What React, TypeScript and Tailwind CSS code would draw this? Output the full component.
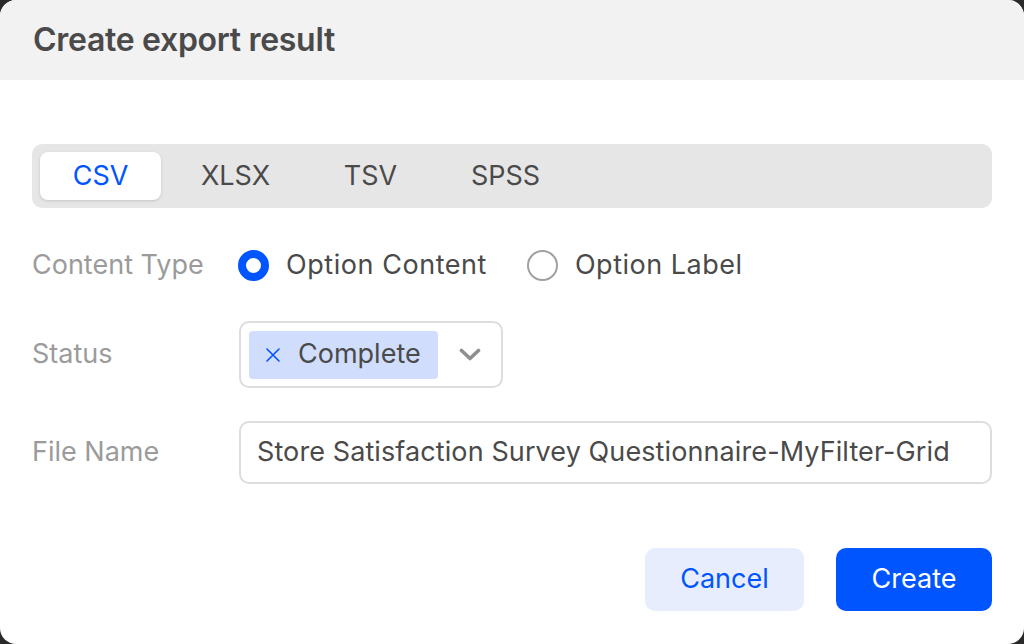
const tabs = ["CSV", "XLSX", "TSV", "SPSS"];

export default function App() {
  return (
    <div
      className="h-[644px] w-[1024px] bg-[#2a2a2a]"
      style={{ fontFamily: "Inter, 'Noto Sans', sans-serif" }}
    >
      <div className="flex h-full w-full flex-col overflow-hidden rounded-[16px] bg-white">
        <div className="flex h-[80px] shrink-0 items-center bg-[#f2f2f2] px-[33px]">
          <h1 className="text-[32px] font-semibold tracking-[-0.3px] text-[#4a4a4a]">
            Create export result
          </h1>
        </div>

        <div className="flex flex-1 flex-col px-[32px] pt-[64px]">
          {/* format tabs */}
          <div className="flex h-[64px] items-center gap-[14px] rounded-[10px] bg-[#e6e6e6] px-[8px]">
            {tabs.map((t, i) => (
              <div
                key={t}
                className={
                  i === 0
                    ? "flex h-[48px] w-[121px] items-center justify-center rounded-[8px] bg-white text-[27px] text-[#0055ff] shadow-[0_1px_3px_rgba(0,0,0,0.15)]"
                    : "flex h-[48px] w-[121px] items-center justify-center text-[27px] text-[#4a4a4a]"
                }
              >
                {t}
              </div>
            ))}
          </div>

          {/* content type */}
          <div className="mt-[24px] flex h-[66px] items-center">
            <div className="w-[206px] shrink-0 text-[27px] text-[#9b9b9b]">Content Type</div>
            <div className="flex items-center">
              <span className="h-[31px] w-[31px] rounded-full border-[8px] border-[#0055ff] bg-white" />
              <span className="ml-[17px] text-[27px] tracking-[0.55px] text-[#4a4a4a]">Option Content</span>
              <span className="ml-[40px] h-[31px] w-[31px] rounded-full border-2 border-[#a0a0a0] bg-white" />
              <span className="ml-[17px] text-[27px] tracking-[0.5px] text-[#4a4a4a]">Option Label</span>
            </div>
          </div>

          {/* status */}
          <div className="mt-[23px] flex items-center">
            <div className="w-[207px] shrink-0 text-[27px] text-[#9b9b9b]">Status</div>
            <div className="flex h-[67px] w-[264px] items-center rounded-[10px] border-2 border-[#dddddd] pl-[8px] pr-[20px]">
              <div className="flex h-[48px] w-[189px] items-center rounded-[4px] bg-[#d1ddfc] pl-[17px]">
                <svg width="14" height="14" viewBox="0 0 14 14" className="shrink-0">
                  <path d="M1 1L13 13M13 1L1 13" stroke="#0055ff" strokeWidth="1.6" strokeLinecap="round" />
                </svg>
                <span className="ml-[18px] text-[27px] text-[#4a4a4a]">Complete</span>
              </div>
              <svg width="22" height="13" viewBox="0 0 22 13" className="ml-auto shrink-0">
                <path
                  d="M2.5 2.5L11 10.5L19.5 2.5"
                  fill="none"
                  stroke="#8e8e8e"
                  strokeWidth="3.6"
                  strokeLinecap="round"
                  strokeLinejoin="round"
                />
              </svg>
            </div>
          </div>

          {/* file name */}
          <div className="mt-[33px] flex items-center">
            <div className="w-[207px] shrink-0 text-[27px] text-[#9b9b9b]">File Name</div>
            <div className="flex h-[63px] flex-1 items-center rounded-[10px] border-2 border-[#dddddd] px-[16px] text-[27px] tracking-[0.1px] text-[#4a4a4a]">
              Store Satisfaction Survey Questionnaire-MyFilter-Grid
            </div>
          </div>

          {/* actions */}
          <div className="mt-[64px] flex justify-end gap-[32px]">
            <button className="h-[63px] w-[159px] rounded-[10px] bg-[#e8edfd] text-[27px] text-[#0055ff]">
              Cancel
            </button>
            <button className="h-[63px] w-[156px] rounded-[10px] bg-[#0055ff] text-[27px] text-white">
              Create
            </button>
          </div>
        </div>
      </div>
    </div>
  );
}
